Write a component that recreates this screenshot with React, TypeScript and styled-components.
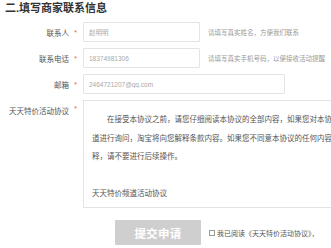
import React from 'react';
import styled, { createGlobalStyle } from 'styled-components';

const GlobalStyle = createGlobalStyle`
  html, body {
    margin: 0;
    padding: 0;
    background: #fff;
    overflow: hidden;
  }
  body {
    font-family: "Liberation Sans", "Noto Sans CJK SC", sans-serif;
  }
`;

const Page = styled.div`
  width: 331px;
  height: 248px;
  overflow: hidden;
`;

const Title = styled.h2`
  margin: 0;
  padding: 1px 0 0 5px;
  height: 15px;
  line-height: 15px;
  font-size: 11px;
  font-weight: bold;
  color: #333;
  white-space: nowrap;
`;

const Form = styled.div`
  display: flex;
  flex-direction: column;
  gap: 6px;
  padding-top: 6px;
`;

const Row = styled.div<{ $top?: boolean }>`
  display: flex;
  align-items: ${(p) => (p.$top ? 'flex-start' : 'center')};
`;

const Label = styled.div<{ $pad?: number }>`
  width: 69px;
  flex-shrink: 0;
  text-align: right;
  font-size: 7.5px;
  color: #555;
  white-space: nowrap;
  padding-top: ${(p) => p.$pad ?? 0}px;
`;

const Star = styled.span<{ $pad?: number }>`
  width: 13px;
  flex-shrink: 0;
  text-align: center;
  color: #f25a3a;
  font-size: 7px;
  padding-top: ${(p) => p.$pad ?? 0}px;
`;

const Input = styled.input<{ $width: number }>`
  box-sizing: border-box;
  width: ${(p) => p.$width}px;
  height: 20px;
  margin: 0 0 0 1px;
  padding: 0 5px;
  border: 1px solid #e3e3e3;
  border-radius: 1px;
  background: #fff;
  font-family: "Liberation Sans", "Noto Sans CJK SC", sans-serif;
  font-size: 6.5px;
  color: #aaa;
  outline: none;
  flex-shrink: 0;
`;

const Hint = styled.span`
  margin-left: 8px;
  font-size: 6.5px;
  color: #999;
  white-space: nowrap;
`;

const Agreement = styled.div`
  box-sizing: border-box;
  width: 380px;
  height: 108px;
  margin-left: 1px;
  flex-shrink: 0;
  border: 1px solid #e3e3e3;
  padding: 10px 8px 0 8px;
  font-size: 7.5px;
  line-height: 18.5px;
  color: #555;
  overflow: hidden;
`;

const Para = styled.p<{ $indent?: boolean }>`
  margin: 0;
  text-indent: ${(p) => (p.$indent ? '2em' : '0')};
  min-height: 18.5px;
`;

const Footer = styled.div`
  display: flex;
  align-items: center;
  padding: 12px 0 0 115px;
`;

const SubmitButton = styled.button`
  width: 86px;
  height: 25px;
  border: none;
  border-radius: 1px;
  background: #cfcfcf;
  color: #fff;
  font-family: "Noto Sans CJK SC", sans-serif;
  font-size: 11.5px;
  font-weight: bold;
  padding: 0;
  letter-spacing: 0.3px;
`;

const Check = styled.span`
  box-sizing: border-box;
  width: 6px;
  height: 6px;
  border: 1px solid #999;
  margin-left: 8px;
  flex-shrink: 0;
`;

const CheckText = styled.span`
  margin-left: 2px;
  font-size: 7px;
  color: #555;
  white-space: nowrap;
`;

const App: React.FC = () => {
  return (
    <Page>
      <GlobalStyle />
      <Title>二.填写商家联系信息</Title>
      <Form>
        <Row>
          <Label>联系人</Label>
          <Star>*</Star>
          <Input $width={117} defaultValue="赵明明" readOnly />
          <Hint>请填写真实姓名，方便我们联系</Hint>
        </Row>
        <Row>
          <Label>联系电话</Label>
          <Star>*</Star>
          <Input $width={117} defaultValue="18374981306" readOnly />
          <Hint>请填写真实手机号码，以便接收活动提醒</Hint>
        </Row>
        <Row>
          <Label>邮箱</Label>
          <Star>*</Star>
          <Input $width={202} defaultValue="2464721207@qq.com" readOnly />
        </Row>
        <Row $top>
          <Label $pad={5}>天天特价活动协议</Label>
          <Star $pad={5}>*</Star>
          <Agreement>
            <Para $indent>
              在接受本协议之前，请您仔细阅读本协议的全部内容，如果您对本协议的条款有疑问，请通过淘宝客服渠道进行询问，淘宝将向您解释条款内容。如果您不同意本协议的任何内容，或者无法准确理解淘宝对条款的解释，请不要进行后续操作。
            </Para>
            <Para />
            <Para>天天特价频道活动协议</Para>
          </Agreement>
        </Row>
      </Form>
      <Footer>
        <SubmitButton type="button">提交申请</SubmitButton>
        <Check />
        <CheckText>我已阅读《天天特价活动协议》，</CheckText>
      </Footer>
    </Page>
  );
};

export default App;
